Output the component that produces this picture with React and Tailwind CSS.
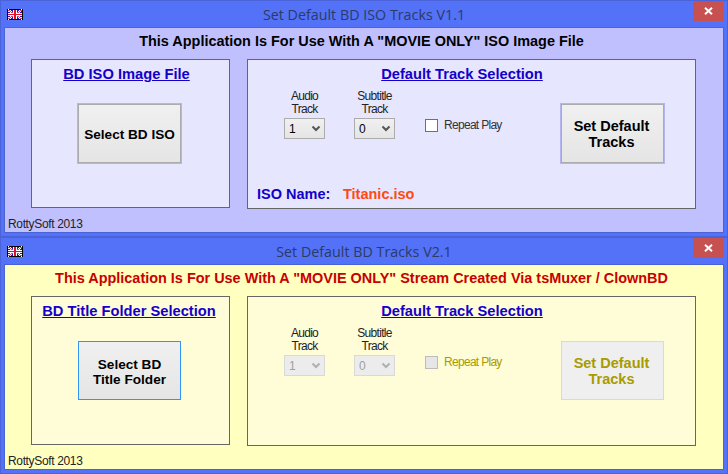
const SANS = "font-['Liberation_Sans',Arial,sans-serif]";

function Flag() {
  return (
    <svg width="16" height="11" viewBox="0 0 16 11" shapeRendering="crispEdges">
      <rect width="16" height="11" fill="#000" />
      <rect x="1" y="1" width="14" height="9" fill="#1a1ad0" />
      <path d="M1 1l14 9M15 1L1 10" stroke="#fff" strokeWidth="2" />
      <path d="M1 1l14 9M15 1L1 10" stroke="#e01030" strokeWidth="0.8" />
      <rect x="6" y="1" width="4" height="9" fill="#fff" />
      <rect x="1" y="4" width="14" height="3" fill="#fff" />
      <rect x="7" y="1" width="2" height="9" fill="#e01030" />
      <rect x="1" y="5" width="14" height="1" fill="#e01030" />
    </svg>
  );
}

function TitleBar({ title }) {
  return (
    <div className="grid h-[26px] grid-cols-[1fr_auto_1fr]">
      <div className="pl-[3px] pt-[8px]">
        <Flag />
      </div>
      <div className="pt-[4px] font-['Open_Sans',sans-serif] text-[14.3px] leading-[20px] text-[#2c3a66]">
        {title}
      </div>
      <div className="flex justify-end">
        <div className="flex h-[20px] w-[31px] items-center justify-center bg-[#c75050]">
          <svg width="9" height="8" viewBox="0 0 9 8">
            <path d="M1 0.8l7 6.4M8 0.8l-7 6.4" stroke="#fff" strokeWidth="2" />
          </svg>
        </div>
      </div>
    </div>
  );
}

function Button({ children, disabled, focused, large }) {
  let look = "border-[#acacac] bg-gradient-to-b from-[#f0f0f0] to-[#e5e5e5] text-black shadow-[0_0_0_1px_#b4b4f0]";
  if (focused) look = "border-[#2f96f4] bg-gradient-to-b from-[#f0f0f0] to-[#e5e5e5] text-black";
  if (disabled) look = "border-[#d9d9d9] bg-[#efefef] text-[#a89b00]";
  return (
    <div className={`flex h-[59px] w-[103px] items-center justify-center border text-center font-bold ${large ? "pr-[2px] text-[14.5px] leading-[16px]" : "pt-[2px] text-[13.6px] leading-[15px]"} ${look}`}>
      <div>{children}</div>
    </div>
  );
}

function TrackSelect({ label, value, disabled }) {
  return (
    <div className="flex w-[41px] flex-col items-center pt-[6px]">
      <div className="whitespace-nowrap text-center text-[12px] leading-[13px] tracking-[-0.7px] text-[#222]">
        {label}
        <br />
        Track
      </div>
      <div className={`mt-[2px] flex h-[21px] w-[41px] items-center justify-between border pl-[4px] pr-[2px] text-[12px] ${disabled ? "border-[#d9d9d9] bg-[#ececec] text-[#a0a0a0]" : "border-[#acacac] bg-gradient-to-b from-[#f0f0f0] to-[#e5e5e5] text-black"}`}>
        <span>{value}</span>
        <svg width="12" height="8" viewBox="0 0 12 8">
          <path d="M2.5 1.5l3.5 3.5 3.5-3.5" fill="none" stroke={disabled ? "#b0b0b0" : "#555"} strokeWidth="2" />
        </svg>
      </div>
    </div>
  );
}

function Repeat({ disabled }) {
  return (
    <div className="ml-[30px] mt-[35px] flex items-start">
      <div className={`h-[13px] w-[13px] border ${disabled ? "border-[#bcbcbc] bg-[#e6e6e6]" : "border-[#707070] bg-white"}`} />
      <span className={`ml-[6px] whitespace-nowrap text-[12px] leading-[13px] tracking-[-0.7px] ${disabled ? "text-[#a89b00]" : "text-[#333]"}`}>
        Repeat Play
      </span>
    </div>
  );
}

function Window({ title, notice, tint, panel, noticeColor, leftTitle, leftInset, leftButton, focused, disabled, isoName }) {
  return (
    <div className={`${SANS} box-border flex h-[237px] w-[728px] flex-col border border-[#4a63d8] bg-[#5372f7] px-[3px] pb-[3px]`}>
      <TitleBar title={title} />
      <div className={`flex h-[206px] flex-col border border-[#4a63d8] ${tint}`}>
        <div className={`h-[24px] pr-[5px] pt-[5px] text-center text-[14.45px] font-bold leading-[16px] ${noticeColor}`}>
          {notice}
        </div>
        <div className="mt-[7px] flex items-start gap-[17px] pl-[26px]">
          <div className={`h-[149px] w-[199px] border border-[#666] ${panel}`}>
            <div className={`pt-[6px] text-center text-[14.7px] font-bold leading-[17px] text-[#1400c8] underline ${leftInset}`}>
              {leftTitle}
            </div>
            <div className="ml-[46px] mt-[21px]">
              <Button focused={focused}>{leftButton}</Button>
            </div>
          </div>
          <div className={`h-[150px] w-[449px] border border-[#666] ${panel}`}>
            <div className="pr-[19px] pt-[6px] text-center text-[14.7px] font-bold leading-[17px] text-[#1400c8] underline">
              Default Track Selection
            </div>
            <div className="flex items-start pl-[36px] pt-[1px]">
              <TrackSelect label="Audio" value="1" disabled={disabled} />
              <div className="ml-[29px]">
                <TrackSelect label="Subtitle" value="0" disabled={disabled} />
              </div>
              <Repeat disabled={disabled} />
              <div className="ml-auto mr-[31px] mt-[20px]">
                <Button disabled={disabled} large>
                  Set Default
                  <br />
                  Tracks
                </Button>
              </div>
            </div>
            {isoName && (
              <div className="mt-[23px] flex pl-[9px] text-[14.5px] font-bold leading-[16px]">
                <span className="w-[86px] text-[#1400c8]">ISO Name:</span>
                <span className="text-[#ff4a10]">{isoName}</span>
              </div>
            )}
          </div>
        </div>
        <div className="mt-auto pb-[1px] pl-[3px] text-[12px] leading-[14px] tracking-[-0.35px] text-[#222]">
          RottySoft 2013
        </div>
      </div>
    </div>
  );
}

export default function App() {
  return (
    <div className="w-[728px]">
      <Window
        title="Set Default BD ISO Tracks V1.1"
        notice={'This Application Is For Use With A "MOVIE ONLY" ISO Image File'}
        tint="bg-[#c0c0ff]"
        panel="bg-[#e6e6ff]"
        noticeColor="text-black"
        leftTitle="BD ISO Image File"
        leftInset="pr-[8px]"
        leftButton="Select BD ISO"
        isoName="Titanic.iso"
      />
      <Window
        title="Set Default BD Tracks V2.1"
        notice={'This Application Is For Use With A "MOVIE ONLY" Stream Created Via tsMuxer / ClownBD'}
        tint="bg-[#ffffc0]"
        panel="bg-[#fffcd8]"
        noticeColor="text-[#c80000]"
        leftTitle="BD Title Folder Selection"
        leftInset="pr-[3px]"
        leftButton={<>Select BD<br />Title Folder</>}
        focused
        disabled
      />
    </div>
  );
}
